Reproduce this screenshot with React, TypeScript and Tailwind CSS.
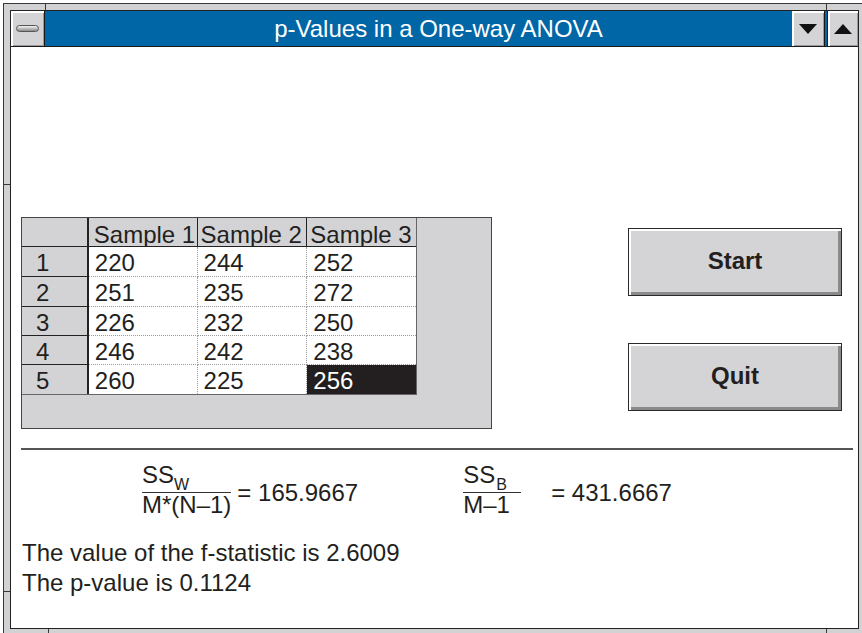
import React from "react";

const rows = [
  { n: "1", v: ["220", "244", "252"], h: "h-[30px]" },
  { n: "2", v: ["251", "235", "272"], h: "h-[30px]" },
  { n: "3", v: ["226", "232", "250"], h: "h-[29px]" },
  { n: "4", v: ["246", "242", "238"], h: "h-[29px]" },
  { n: "5", v: ["260", "225", "256"], h: "h-[29px]" },
];

function Btn({ label }: { label: string }) {
  return (
    <div className="w-[214px] h-[68px] border border-[#2a2a2a] bg-[#d4d4d6] shadow-[inset_2px_2px_0_#ffffff,inset_-3px_-3px_0_#8a8a8a] flex items-center justify-center pb-[3px]">
      <span className="text-[24px] font-bold leading-none text-[#231f20]">{label}</span>
    </div>
  );
}

export default function App() {
  return (
    <div className="w-[862px] h-[633px] overflow-hidden bg-white font-['Liberation_Sans',Arial,sans-serif] text-[#231f20]">
      <div className="pl-[3px] pt-[3px]">
        <div className="relative w-fit border border-[#3a3a3a] bg-[#d2d2d4] p-[6px]">
          {/* frame ticks */}
          <div className="absolute left-[41px] top-0 w-px h-[6px] bg-[#3a3a3a]" />
          <div className="absolute left-[822px] top-0 w-px h-[6px] bg-[#3a3a3a]" />
          <div className="absolute left-0 top-[587px] w-[6px] h-px bg-[#3a3a3a]" />
          <div className="absolute left-0 top-[180px] w-[6px] h-px bg-[#3a3a3a]" />
          <div className="absolute left-[44px] top-[625px] w-px h-[10px] bg-[#3a3a3a]" />
          <div className="absolute left-[822px] top-[625px] w-px h-[10px] bg-[#3a3a3a]" />
          <div className="w-[849px] h-[619px] border border-[#222] bg-white flex flex-col">
            {/* title bar */}
            <div className="h-[36px] flex bg-[#0066a6] border-b border-[#1a1a1a] shrink-0">
              <div className="w-[34px] h-[35px] bg-[#d4d4d6] border-r border-[#1a1a1a] shadow-[inset_2px_2px_0_#ffffff,inset_-1px_-1px_0_#9a9a9a] flex items-center justify-center">
                <div className="w-[23px] h-[7px] rounded-full border border-[#555] bg-gradient-to-b from-[#f4f4f4] to-[#8c8c8c]" />
              </div>
              <div className="flex-1 flex items-center justify-center pl-[40px] text-white text-[24px] leading-none">
                p-Values in a One-way ANOVA
              </div>
              <div className="w-[32px] h-[35px] bg-[#d4d4d6] shadow-[inset_2px_2px_0_#ffffff,inset_-1px_-1px_0_#9a9a9a] flex items-center justify-center">
                <svg width="18" height="10" viewBox="0 0 18 10"><polygon points="0,0 18,0 9,10" fill="#111" /></svg>
              </div>
              <div className="w-[4px] h-[35px] bg-[#0066a6] border-x border-[#1a1a1a]" />
              <div className="w-[30px] h-[35px] bg-[#d4d4d6] shadow-[inset_2px_2px_0_#ffffff,inset_-1px_-1px_0_#9a9a9a] flex items-center justify-center">
                <svg width="18" height="10" viewBox="0 0 18 10"><polygon points="0,10 18,10 9,0" fill="#111" /></svg>
              </div>
            </div>

            {/* content */}
            <div className="flex-1 flex flex-col">
              <div className="flex mt-[170px]">
                <div className="ml-[10px] w-[471px] h-[212px] border border-[#444] bg-[#d3d3d5]">
                  <div className="w-[395px] border-r border-b border-[#666]">
                    {/* header */}
                    <div className="flex h-[29px] border-b border-[#222] text-[24px] leading-[28px]">
                      <div className="w-[67px] border-r-2 border-[#222]" />
                      <div className="w-[109px] border-r border-[#222] pl-[5px] pt-[3px]">Sample 1</div>
                      <div className="w-[110px] border-r border-[#222] pl-[3px] pt-[3px]">Sample 2</div>
                      <div className="w-[109px] pl-[3px] pt-[3px]">Sample 3</div>
                    </div>
                    {rows.map((r, i) => (
                      <div key={r.n} className={`flex ${r.h} text-[24px] leading-[28px]`}>
                        <div className={`w-[67px] border-r-2 border-[#222] pl-[14px] pt-[2px] ${i < 4 ? "border-b" : ""}`}>{r.n}</div>
                        {r.v.map((v, j) => {
                          const sel = i === 4 && j === 2;
                          const w = j === 1 ? "w-[110px]" : "w-[109px]";
                          return (
                            <div
                              key={j}
                              className={`${w} pl-[6px] pt-[2px] ${sel ? "bg-[#231f20] text-white" : "bg-white"} ${j < 2 ? "border-r border-dotted border-[#9a9a9a]" : ""} ${i < 4 ? "border-b border-dotted border-[#9a9a9a]" : ""}`}
                            >
                              {v}
                            </div>
                          );
                        })}
                      </div>
                    ))}
                  </div>
                </div>
                <div className="ml-[136px] mt-[11px] flex flex-col gap-[47px]">
                  <Btn label="Start" />
                  <Btn label="Quit" />
                </div>
              </div>

              <div className="ml-[10px] mt-[19px] w-[832px] h-[2px] bg-[#555]" />

              {/* formulas */}
              <div className="flex mt-[13px] ml-[131px] text-[24px]">
                <div className="flex items-center">
                  <div className="flex flex-col">
                    <div className="h-[29px] leading-[24px] flex">
                      <span>SS</span>
                      <span className="text-[16px] h-[12px] leading-[12px] mt-[16px]">W</span>
                    </div>
                    <div className="border-t border-[#333] leading-[24px]">M*(N–1)</div>
                  </div>
                  <div className="ml-[6px] leading-[24px] mt-[5px]">= 165.9667</div>
                </div>
                <div className="flex items-center ml-[105px]">
                  <div className="flex flex-col w-[58px]">
                    <div className="h-[29px] leading-[24px] flex">
                      <span>SS</span>
                      <span className="text-[16px] h-[12px] leading-[12px] mt-[16px] ml-[1px]">B</span>
                    </div>
                    <div className="border-t border-[#333] leading-[24px]">M–1</div>
                  </div>
                  <div className="ml-[30px] leading-[24px] mt-[5px]">= 431.6667</div>
                </div>
              </div>

              <div className="ml-[11px] mt-[21px] text-[24px] leading-[30px]">
                <div>The value of the f-statistic is 2.6009</div>
                <div>The p-value is 0.1124</div>
              </div>
            </div>
          </div>
        </div>
      </div>
    </div>
  );
}
